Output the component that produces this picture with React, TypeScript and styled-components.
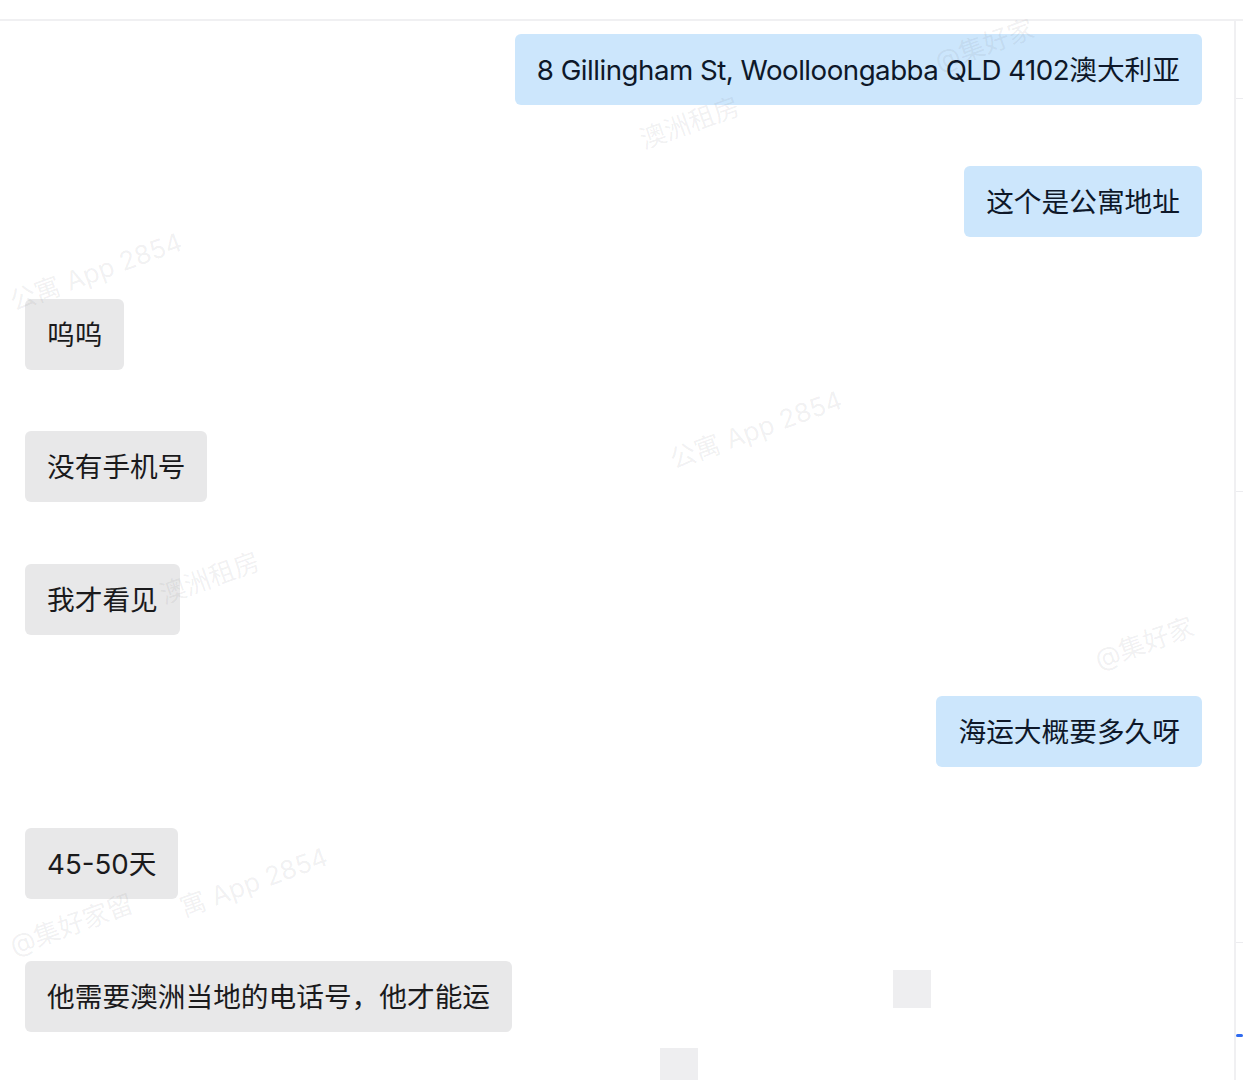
import styled, { createGlobalStyle } from 'styled-components';

const GlobalStyle = createGlobalStyle`
  html, body {
    margin: 0;
    padding: 0;
    background: #ffffff;
  }
  body {
    font-family: Inter, 'Noto Sans CJK SC', sans-serif;
    overflow: hidden;
  }
`;

const Page = styled.div`
  position: relative;
  width: 1243px;
  height: 1080px;
  overflow: hidden;
  background: #fff;
`;

const TopBar = styled.div`
  height: 19px;
  border-bottom: 2px solid #f0f0f2;
`;

const Body = styled.div`
  display: flex;
  height: 1059px;
`;

const ChatColumn = styled.div`
  width: 1236px;
  flex-shrink: 0;
  border-right: 2px solid #f0f0f2;
  padding: 13px 32px 0 25px;
  box-sizing: border-box;
  display: flex;
  flex-direction: column;
  gap: 61.4px;
`;

const SideStrip = styled.div`
  flex: 1;
  display: flex;
  flex-direction: column;
`;

const SideLine = styled.div<{ $top: number }>`
  margin-top: ${(p) => p.$top}px;
  height: 1px;
  background: #ececef;
`;

const SideAccent = styled.div`
  margin-top: auto;
  margin-bottom: 43px;
  height: 3px;
  background: #2f6bf0;
  border-radius: 2px;
`;

const Row = styled.div<{ $mine?: boolean }>`
  display: flex;
  justify-content: ${(p) => (p.$mine ? 'flex-end' : 'flex-start')};
`;

const Bubble = styled.div<{ $mine?: boolean }>`
  position: relative;
  z-index: 1;
  padding: 18px 22px 16px;
  line-height: 37px;
  font-size: 27.7px;
  border-radius: 6px;
  white-space: nowrap;
  background: ${(p) => (p.$mine ? '#cce6fc' : '#e8e8e9')};
  color: ${(p) => (p.$mine ? '#0e1829' : '#1a1a1c')};
`;

const Latin = styled.span`
  letter-spacing: -0.5px;
`;

const Watermark = styled.div<{ $x: number; $y: number }>`
  position: absolute;
  left: ${(p) => p.$x}px;
  top: ${(p) => p.$y}px;
  z-index: 2;
  font-size: 26px;
  color: rgba(60, 60, 70, 0.075);
  white-space: nowrap;
  transform: rotate(-20deg);
  transform-origin: left center;
  pointer-events: none;
`;

const Smudge = styled.div<{ $x: number; $y: number; $w: number; $h: number }>`
  position: absolute;
  left: ${(p) => p.$x}px;
  top: ${(p) => p.$y}px;
  width: ${(p) => p.$w}px;
  height: ${(p) => p.$h}px;
  background: #eeeef0;
`;

const messages: { text: React.ReactNode; mine?: boolean }[] = [
  {
    text: (
      <>
        <Latin>8 Gillingham St, Woolloongabba QLD 4102</Latin>澳大利亚
      </>
    ),
    mine: true,
  },
  { text: '这个是公寓地址', mine: true },
  { text: '呜呜' },
  { text: '没有手机号' },
  { text: '我才看见' },
  { text: '海运大概要多久呀', mine: true },
  { text: '45-50天' },
  { text: '他需要澳洲当地的电话号，他才能运' },
];

const marks = [
  { x: 10, y: 282, t: '公寓 App 2854' },
  { x: 640, y: 120, t: '澳洲租房' },
  { x: 935, y: 42, t: '@集好家' },
  { x: 670, y: 440, t: '公寓 App 2854' },
  { x: 160, y: 575, t: '澳洲租房' },
  { x: 1095, y: 640, t: '@集好家' },
  { x: 180, y: 888, t: '寓 App 2854' },
  { x: 10, y: 926, t: '@集好家留' },
];

export default function App() {
  return (
    <>
      <GlobalStyle />
      <Page>
        <TopBar />
        <Body>
          <ChatColumn>
            {messages.map((m, i) => (
              <Row key={i} $mine={m.mine}>
                <Bubble $mine={m.mine}>{m.text}</Bubble>
              </Row>
            ))}
          </ChatColumn>
          <SideStrip>
            <SideLine $top={77} />
            <SideLine $top={392} />
            <SideLine $top={450} />
            <SideAccent />
          </SideStrip>
        </Body>
        {marks.map((m, i) => (
          <Watermark key={i} $x={m.x} $y={m.y}>
            {m.t}
          </Watermark>
        ))}
        <Smudge $x={893} $y={970} $w={38} $h={38} />
        <Smudge $x={660} $y={1048} $w={38} $h={32} />
      </Page>
    </>
  );
}
